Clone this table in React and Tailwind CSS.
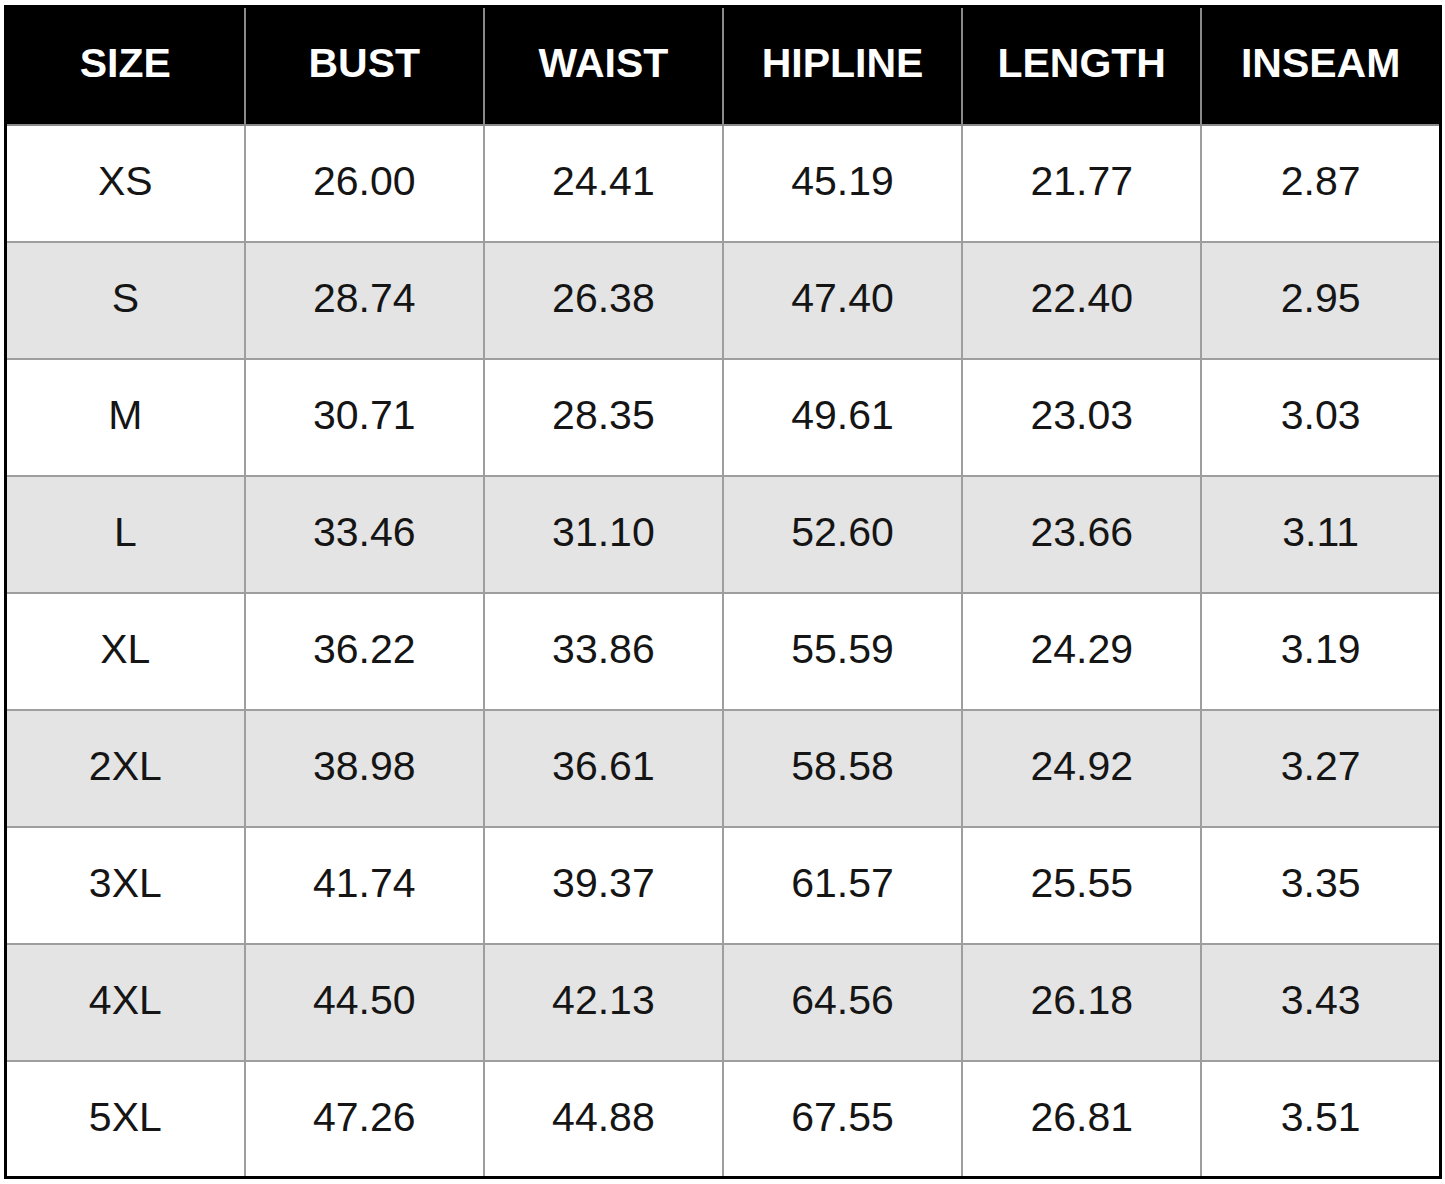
const columns = ["SIZE", "BUST", "WAIST", "HIPLINE", "LENGTH", "INSEAM"];

const rows = [
  ["XS", "26.00", "24.41", "45.19", "21.77", "2.87"],
  ["S", "28.74", "26.38", "47.40", "22.40", "2.95"],
  ["M", "30.71", "28.35", "49.61", "23.03", "3.03"],
  ["L", "33.46", "31.10", "52.60", "23.66", "3.11"],
  ["XL", "36.22", "33.86", "55.59", "24.29", "3.19"],
  ["2XL", "38.98", "36.61", "58.58", "24.92", "3.27"],
  ["3XL", "41.74", "39.37", "61.57", "25.55", "3.35"],
  ["4XL", "44.50", "42.13", "64.56", "26.18", "3.43"],
  ["5XL", "47.26", "44.88", "67.55", "26.81", "3.51"],
];

const App = () => {
  return (
    <div className="min-h-[1184px] bg-white pl-[4px] pt-[5px] font-['Liberation_Sans',Arial,sans-serif]">
      <table className="w-[1438px] table-fixed border-collapse border-[3px] border-black">
        <thead>
          <tr className="h-[118px] bg-black">
            {columns.map((col) => (
              <th
                key={col}
                className="border-x-2 border-b-2 border-[#8a8a8a] pb-[5px] text-center text-[41px] font-bold text-white first:border-l-0 last:border-r-0"
              >
                {col}
              </th>
            ))}
          </tr>
        </thead>
        <tbody>
          {rows.map((row, index) => (
            <tr
              key={row[0]}
              className={`h-[117px] ${index % 2 === 1 ? "bg-[#e4e4e4]" : "bg-white"}`}
            >
              {row.map((value, i) => (
                <td
                  key={i}
                  className="border-2 border-[#9e9e9e] pb-[2px] text-center text-[41px] text-[#151515] first:border-l-0 last:border-r-0"
                >
                  {value}
                </td>
              ))}
            </tr>
          ))}
        </tbody>
      </table>
    </div>
  );
};

export default App;
